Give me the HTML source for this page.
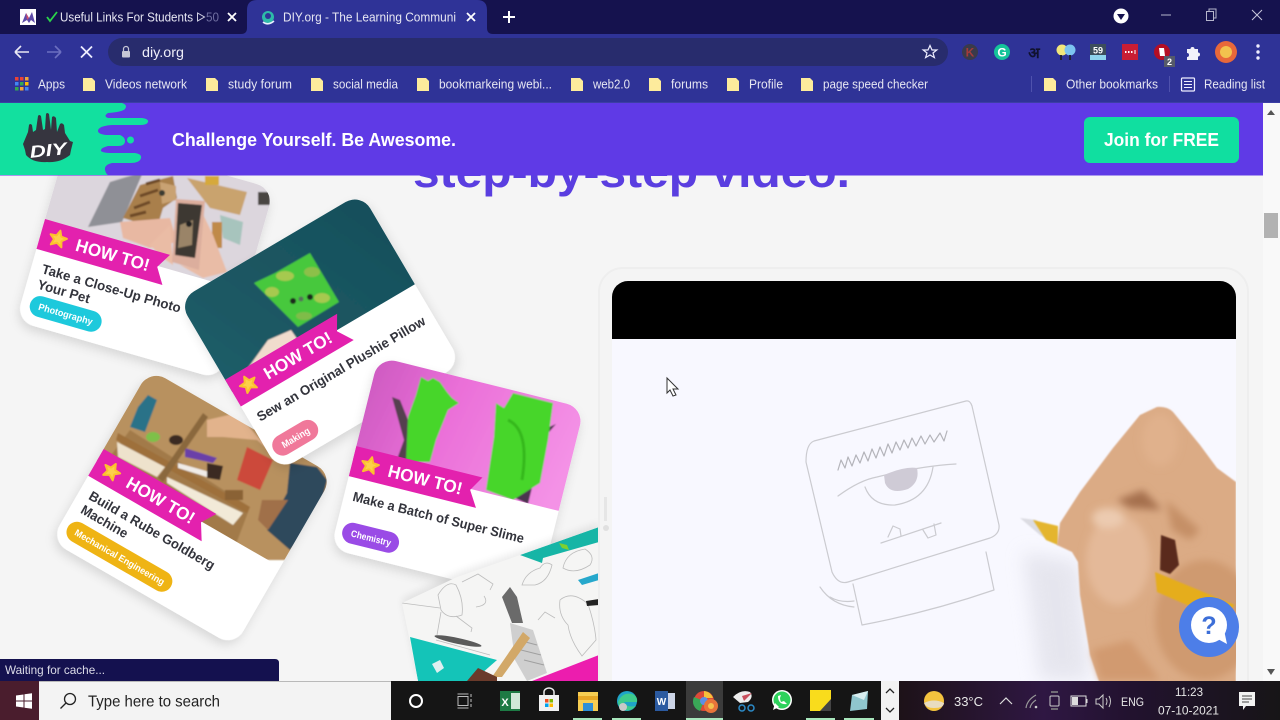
<!DOCTYPE html>
<html><head><meta charset="utf-8"><title>DIY.org</title>
<style>
html,body{margin:0;padding:0;width:1280px;height:720px;overflow:hidden;background:#f5f5f5}
svg{display:block;font-family:"Liberation Sans","Noto Sans CJK SC",sans-serif}
.t{fill:#e6e6f2;font-size:12.5px}
.h{fill:#fff;font-weight:700;font-size:18px}
.ti{fill:#33343c;font-weight:700;font-size:13.5px}
.ht{fill:#fff;font-weight:700;font-size:17.5px}
.pl{fill:#fff;font-weight:700;font-size:9.5px}
</style></head><body>
<svg width="1280" height="720" viewBox="0 0 1280 720" xmlns="http://www.w3.org/2000/svg">
<defs>
<filter id="b" x="-5%" y="-5%" width="110%" height="110%"><feGaussianBlur stdDeviation="0.8"/></filter>
<filter id="b3" x="-30%" y="-30%" width="160%" height="160%"><feGaussianBlur stdDeviation="4"/></filter>
<filter id="b8" x="-40%" y="-40%" width="180%" height="180%"><feGaussianBlur stdDeviation="9"/></filter>
<filter id="s" x="-20%" y="-20%" width="140%" height="140%"><feDropShadow dx="0" dy="5" stdDeviation="5" flood-color="#000" flood-opacity=".12"/></filter>
<clipPath id="c1"><path transform="translate(145 255) rotate(16)" d="M-106 7V-81a18 18 0 0 1 18-18H88a18 18 0 0 1 18 18V7Z"/></clipPath>
<clipPath id="c2"><path transform="translate(320 332) rotate(-30.5)" d="M-106 7V-81a18 18 0 0 1 18-18H88a18 18 0 0 1 18 18V7Z"/></clipPath>
<clipPath id="c3"><path transform="translate(192 508) rotate(30)" d="M-106 7V-81a18 18 0 0 1 18-18H88a18 18 0 0 1 18 18V7Z"/></clipPath>
<clipPath id="c4"><path transform="translate(457.5 478.5) rotate(14)" d="M-106 7V-81a18 18 0 0 1 18-18H88a18 18 0 0 1 18 18V7Z"/></clipPath>
<clipPath id="c5"><path d="M402 603L457 577L520 555L599 527V681H418Z"/></clipPath>
<clipPath id="pg"><rect x="0" y="175" width="1263" height="506"/></clipPath>
<clipPath id="vid"><rect x="612" y="339" width="624" height="345"/></clipPath>
<linearGradient id="tb" x1="0" x2="1" y1="0" y2="0"><stop offset="0" stop-color="#1d1218"/><stop offset=".38" stop-color="#2f1743"/><stop offset=".6" stop-color="#22122f"/><stop offset="1" stop-color="#171517"/></linearGradient>
<linearGradient id="pk" x1="0" x2="1" y1="0" y2=".3"><stop offset="0" stop-color="#bf4fb5"/><stop offset=".5" stop-color="#ea6fd8"/><stop offset="1" stop-color="#f492e6"/></linearGradient>
<linearGradient id="tl" x1="0" x2="1" y1="1" y2="0"><stop offset="0" stop-color="#1c5f6a"/><stop offset="1" stop-color="#174b57"/></linearGradient>
</defs>

<rect width="1280" height="720" fill="#f5f5f5"/>
<g clip-path="url(#pg)">
<text x="413" y="187" font-size="45" font-weight="700" fill="#5a3ee0" textLength="437" lengthAdjust="spacingAndGlyphs">step-by-step video.</text>

<!-- Card 1 -->
<g transform="translate(145 255) rotate(16)" filter="url(#s)"><rect x="-106" y="-99" width="212" height="198" rx="18" fill="#fff"/></g>
<g clip-path="url(#c1)"><g filter="url(#b)">
<rect x="20" y="130" width="270" height="170" fill="#dcd6dd"/>
<path d="M187 178L247 192L240 215L210 208Z" fill="#c9a36e"/>
<path d="M205 176h14v9h-14z" fill="#d6a93a"/>
<path d="M220 215L243 222L240 245L223 238Z" fill="#a7c4bd"/>
<path d="M212 222h10v26h-10z" fill="#c08a4a"/>
<path d="M258 192h12v13h-12z" fill="#4a4442"/>
<path d="M88 227L110 182L143 172L122 222Z" fill="#8f9096"/>
<path d="M123 218L140 185L173 176L177 198L163 208L157 228Z" fill="#a97f4b"/>
<path d="M140 196L158 190M134 208L150 202M146 184L160 180M130 216L146 212" stroke="#6d4a28" stroke-width="3"/>
<path d="M160 182L176 186L176 200L162 204Z" fill="#c9a273"/><circle cx="162" cy="193" r="3" fill="#3a3a30"/>
<path d="M120 222L170 218L177 242L150 248L123 238Z" fill="#e8b8a2"/>
<path d="M150 245L170 225L173 265L163 258Z" fill="#eabca5"/>
<path d="M200 208L213 235L227 272L203 278L180 265L193 268Z" fill="#e9bca6"/>
<path d="M176 199L205 201L199 270L172 262Z" fill="#dcae9d"/>
<path d="M178 203L202 205L195 258L175 255Z" fill="#3d3833"/>
<path d="M180 225L193 220L192 245L178 248Z" fill="#9a8468"/>
<circle cx="189" cy="224" r="3" fill="#222"/>
</g></g>
<g transform="translate(145 255) rotate(16)">
<path d="M-106 -7H24L15 8L25 24H-106Z" fill="#e321ae"/>
<path d="M-88 0l2.500 5.500 6 .5-4.600 3.800 1.600 5.900-5.500-3.200-5.500 3.200 1.600-5.900-4.600-3.800 6-.5z" fill="#fdd04a" stroke="#fcc02e" stroke-width="2" stroke-linejoin="round"/>
<text x="-69" y="15" class="ht" textLength="76" lengthAdjust="spacingAndGlyphs">HOW TO!</text>
<text x="-95" y="46" class="ti" textLength="144" lengthAdjust="spacingAndGlyphs">Take a Close-Up Photo</text>
<text x="-95" y="62" class="ti" textLength="54" lengthAdjust="spacingAndGlyphs">Your Pet</text>
<rect x="-97" y="68" width="74" height="21" rx="10.500" fill="#1dc9dc"/>
<text x="-88" y="82" class="pl" textLength="56" lengthAdjust="spacingAndGlyphs">Photography</text>
</g>

<!-- Card 3 -->
<g transform="translate(192 508) rotate(30)" filter="url(#s)"><rect x="-106" y="-99" width="212" height="198" rx="18" fill="#fff"/></g>
<g clip-path="url(#c3)"><g filter="url(#b)">
<rect x="70" y="360" width="270" height="200" fill="#b8915f"/>
<path d="M130 430L250 507L230 560L100 470Z" fill="#a27a4a"/>
<path d="M118 433L250 507L247 513L116 440Z" fill="#9e703a"/>
<path d="M148 395L157 400L145 432L130 427L138 407Z" fill="#2a7288"/>
<path d="M117 442L165 467L157 477L118 457Z" fill="#eee2cc"/>
<ellipse cx="153" cy="437" rx="7" ry="5" fill="#7ec04a"/>
<ellipse cx="176" cy="440" rx="7" ry="5" fill="#3a2a20"/>
<path d="M207 420L237 413L263 443L277 457L257 440L223 437L207 437Z" fill="#e2b38c"/>
<path d="M247 447L273 460L260 490L237 480Z" fill="#cc4a3a"/>
<path d="M185 448L217 458L213 463L185 457Z" fill="#6a3fa8"/>
<path d="M178 463L213 473L210 478L178 468Z" fill="#f0ece8"/>
<path d="M207 463L223 466L220 480L207 478Z" fill="#3a2a22"/>
<path d="M167 477L243 513L233 525L167 483Z" fill="#f2ead8"/>
<path d="M203 413L208 417L163 482L158 478Z" fill="#8a683c"/>
<path d="M225 490h18v10h-18z" fill="#8a6236"/>
<path d="M290 463L317 467L327 480L317 520L290 550L267 530L287 493Z" fill="#2f4a5c"/>
<path d="M262 500L288 500L268 530L258 520Z" fill="#a0704a"/>
</g></g>
<g transform="translate(192 508) rotate(30)">
<path d="M-106 -7H24L15 8L25 24H-106Z" fill="#e321ae"/>
<path d="M-88 0l2.500 5.500 6 .5-4.600 3.800 1.600 5.900-5.500-3.200-5.500 3.200 1.600-5.900-4.600-3.800 6-.5z" fill="#fdd04a" stroke="#fcc02e" stroke-width="2" stroke-linejoin="round"/>
<text x="-69" y="15" class="ht" textLength="76" lengthAdjust="spacingAndGlyphs">HOW TO!</text>
<text x="-95" y="44" class="ti" textLength="143" lengthAdjust="spacingAndGlyphs">Build a Rube Goldberg</text>
<text x="-95" y="60" class="ti" textLength="52" lengthAdjust="spacingAndGlyphs">Machine</text>
<rect x="-98" y="68" width="119" height="21" rx="10.500" fill="#efb414"/>
<text x="-89" y="82" class="pl" textLength="102" lengthAdjust="spacingAndGlyphs">Mechanical Engineering</text>
</g>

<!-- Card 2 -->
<g transform="translate(320 332) rotate(-30.5)" filter="url(#s)"><rect x="-106" y="-99" width="212" height="198" rx="18" fill="#fff"/></g>
<g clip-path="url(#c2)"><g filter="url(#b)">
<rect x="170" y="190" width="300" height="220" fill="url(#tl)"/>
<path d="M245 372L268 340L291 330L298 340L296 352L262 375Z" fill="#f0dccd"/>
<path d="M275 273L310 253L339 302L298 327L254 283Z" fill="#46c83c"/>
<ellipse cx="285" cy="276" rx="9" ry="5" fill="#a6c94f"/><ellipse cx="312" cy="272" rx="8" ry="5" fill="#8cc04a"/>
<ellipse cx="272" cy="292" rx="7" ry="5" fill="#a6c94f"/><ellipse cx="322" cy="298" rx="8" ry="5" fill="#a6c94f"/>
<ellipse cx="304" cy="316" rx="8" ry="4" fill="#7fbc48"/>
<circle cx="293" cy="301" r="3" fill="#1f2a1f"/><circle cx="310" cy="297" r="3" fill="#1f2a1f"/><circle cx="301" cy="299" r="2.500" fill="#57705a"/>
</g></g>
<g transform="translate(320 332) rotate(-30.500)">
<path d="M-106 -7H24L15 8L25 24H-106Z" fill="#e321ae"/>
<path d="M-88 0l2.500 5.500 6 .5-4.600 3.800 1.600 5.900-5.500-3.200-5.500 3.200 1.600-5.900-4.600-3.800 6-.5z" fill="#fdd04a" stroke="#fcc02e" stroke-width="2" stroke-linejoin="round"/>
<text x="-69" y="15" class="ht" textLength="76" lengthAdjust="spacingAndGlyphs">HOW TO!</text>
<text x="-97" y="47" class="ti" textLength="193" lengthAdjust="spacingAndGlyphs">Sew an Original Plushie Pillow</text>
<rect x="-100" y="68" width="50" height="21" rx="10.500" fill="#f0789a"/>
<text x="-90" y="82" class="pl" textLength="31" lengthAdjust="spacingAndGlyphs">Making</text>
</g>

<!-- Card 4 -->
<g transform="translate(457.5 478.5) rotate(14)" filter="url(#s)"><rect x="-106" y="-99" width="212" height="198" rx="18" fill="#fff"/></g>
<g clip-path="url(#c4)"><g filter="url(#b)">
<rect x="330" y="350" width="270" height="170" fill="url(#pk)"/>
<path d="M392 397L400 400L416 440L408 462L396 462L404 440Z" fill="#55404f"/>
<path d="M421 377L428 381L433 378L440 382L447 392L452 398L459 403L448 410L436 440L430 462L406 462L407 440L408 417L416 395Z" fill="#47d62b"/>
<path d="M498 490L528 504L544 438L556 424L538 432L520 470Z" fill="#4b3550"/>
<path d="M496 403L504 408L513 393L553 403L548 440L540 483L513 500L486 490L494 437Z" fill="#47d62b"/>
<path d="M508 420Q530 430 522 480" stroke="#36b81f" stroke-width="3" fill="none"/>
</g></g>
<g transform="translate(457.5 478.5) rotate(14)">
<path d="M-106 -7H24L15 8L25 24H-106Z" fill="#e321ae"/>
<path d="M-88 0l2.500 5.500 6 .5-4.600 3.800 1.600 5.900-5.500-3.200-5.500 3.200 1.600-5.900-4.600-3.800 6-.5z" fill="#fdd04a" stroke="#fcc02e" stroke-width="2" stroke-linejoin="round"/>
<text x="-69" y="15" class="ht" textLength="76" lengthAdjust="spacingAndGlyphs">HOW TO!</text>
<text x="-97" y="47" class="ti" textLength="176" lengthAdjust="spacingAndGlyphs">Make a Batch of Super Slime</text>
<rect x="-99" y="68" width="58" height="21" rx="10.500" fill="#9a4be6"/>
<text x="-90" y="82" class="pl" textLength="41" lengthAdjust="spacingAndGlyphs">Chemistry</text>
</g>

<!-- Card 5 -->
<path d="M402 603L457 577L520 555L599 527V681H418Z" fill="#000" opacity=".08" transform="translate(0 -4)" filter="url(#b3)"/>
<g clip-path="url(#c5)">
<rect x="400" y="520" width="200" height="165" fill="#f5f5f4"/>
<path d="M410 637L497 660L473 681H418Z" fill="#14c4b8"/>
<path d="M432 664l8-4 4 8-7 5z" fill="#dfeff0"/>
<path d="M520 555L599 527V542L543 558L542 563Z" fill="#16b5a6"/>
<path d="M559 543l8 2 2 5-7-2z" fill="#7fd030"/>
<path d="M532 681L599 655V681Z" fill="#ec1dae"/>
<path d="M578 580L599 573V580L582 585Z" fill="#26a8cc"/>
<g fill="none" stroke="#bcbcbc" stroke-width=".8">
<path d="M438 595Q447 580 456 585Q464 600 462 615Q448 620 441 610ZM462 582L478 574L493 584L490 590M484 596Q490 605 476 607M441 612L437 635M456 616L472 628L471 632M402 603L440 608M436 640L490 655"/>
<path d="M522 585Q526 572 540 568Q545 560 552 565Q548 582 535 585ZM563 568Q566 552 585 549Q596 556 590 565Q575 575 563 568Z"/>
<path d="M560 600Q572 590 588 604Q595 625 596 640L582 656Q570 640 568 625Q558 615 560 600ZM538 620L545 612L555 618"/>
</g>
<path d="M502 597L510 587L517 597L523 623L512 623Z" fill="#6a6a6a"/>
<path d="M510 623L533 630L547 673L527 681L515 660Z" fill="#cfcfcf"/>
<path d="M518 640L537 645M521 650L541 655M524 660L544 665" stroke="#a0a0a0"/>
<ellipse cx="458" cy="641" rx="24" ry="3" transform="rotate(12 458 641)" fill="#5a5a5a"/>
<path d="M523 632L530 638L502 677L492 677Z" fill="#d2a868"/>
<path d="M467 681L478 668L497 677V681Z" fill="#6a3a2a"/>
<path d="M586 601l13-2v6l-12 1z" fill="#222"/>
</g>

<!-- Video card -->
<rect x="599" y="268" width="649" height="440" rx="24" fill="#f4f4f4" stroke="#eeeeee" stroke-width="2"/>
<path d="M612 339V297a16 16 0 0 1 16-16H1220a16 16 0 0 1 16 16V339Z" fill="#000"/>
<rect x="612" y="339" width="624" height="345" fill="#f8f8ff"/>
<rect x="604" y="497" width="3" height="24" fill="#e6e6e6"/><circle cx="606" cy="528" r="3" fill="#e0e0e0"/>

<!-- drawing -->
<g fill="none" stroke="#cbcbd0" stroke-width="1.200" stroke-linecap="round" stroke-linejoin="round">
<path d="M814 441L966 401Q970 400 972 406L999 525Q1000 534 990 538L848 582Q838 585 832 572L806 462Q806 444 814 441Z"/>
<path d="M853 584L862 625Q930 612 994 590L986 552"/>
<path d="M820 587Q832 605 854 607M830 597Q840 603 854 601"/>
<path d="M838 470L841 460L845 468L848 457L852 466L856 455L860 463L864 452L868 461L872 449L876 458L880 447L884 456L888 444L892 453L896 442L900 450L904 440L908 448L912 438L916 446L921 436L925 444L930 435L934 442L940 433L944 441L947 431" stroke="#b4b4ba"/>
<path d="M838 496Q860 480 877 477Q920 466 956 464"/>
<path d="M865 487Q872 506 895 505Q928 500 933 467"/>
<path d="M881 543L941 523M888 537L893 526L900 529L901 536M923 530L928 538L936 535L934 524"/>
</g>
<path d="M884 475Q905 466 917 468Q920 482 908 489Q890 495 885 483Z" fill="#cfcbd6"/>

<!-- hand -->
<g clip-path="url(#vid)">
<path d="M1023 552L1078 562L1090 680H1040Z" fill="#d4d4de" opacity=".5" filter="url(#b8)"/>
<path d="M1020 518L1036 520L1058 545L1040 535Z" fill="#dcdce2" filter="url(#b)"/>
<path d="M1033 520L1058 526L1058 545L1046 540Z" fill="#e4b52e" filter="url(#b)"/>
<path d="M1157 407Q1167 406 1173 412L1200 445L1217 468L1236 482V684H1100L1090 655L1080 595L1078 562L1072 552L1057 545L1060 523L1080 492L1113 448L1140 415Z" fill="#dbab85" filter="url(#b)"/>
<g filter="url(#b3)">
<ellipse cx="1118" cy="560" rx="32" ry="45" fill="#e4b999"/>
<ellipse cx="1108" cy="518" rx="16" ry="10" fill="#eccbb0"/>
<ellipse cx="1160" cy="440" rx="18" ry="26" fill="#e0b18c"/>
<path d="M1117 500L1143 490L1162 510L1130 508Z" fill="#a5704e"/>
<path d="M1166 500L1200 530L1190 540L1172 530Z" fill="#c58f66"/>
<ellipse cx="1205" cy="620" rx="50" ry="60" fill="#cf9a70"/>
<path d="M1100 680L1092 650L1130 640L1160 680Z" fill="#d19a6f"/>
</g>
<path d="M1161 535L1175 540L1179 565L1170 574L1160 570Z" fill="#5a2a1a" filter="url(#b)"/>
<path d="M1155 572L1235 605L1230 610L1187 605L1157 592Z" fill="#e5ad1f" filter="url(#b)"/>
</g>

<!-- cursor -->
<path d="M667 378V393L670 390L673 396L676 395L673 389H678Z" fill="#fff" stroke="#333" stroke-width="1"/>

<!-- help -->
<circle cx="1209" cy="627" r="30" fill="#4d7ee8"/>
<circle cx="1209" cy="625" r="18" fill="#fff"/>
<path d="M1216 638L1227 644L1224 630Z" fill="#fff"/>
<text x="1209" y="634" text-anchor="middle" font-size="25" font-weight="700" fill="#3d6fd8">?</text>
</g>

<!-- scrollbar -->
<rect x="1263" y="103" width="17" height="578" fill="#f9f9f9"/>
<path d="M1267 115L1271 110L1275 115Z" fill="#555"/>
<path d="M1267 669L1271 675L1275 669Z" fill="#555"/>
<rect x="1264" y="213" width="14" height="25" fill="#b2b2b2"/>

<!-- DIY banner -->
<rect x="0" y="103" width="1263" height="72.500" fill="#5f3ae6"/>
<path d="M0 103H122Q128 105 125 109Q122 112 108 113Q103 116 108 118H142Q149 119 148 122Q147 125 140 125H112Q98 126 98 131Q98 134 106 135H120Q125 137 125 141Q125 146 118 146H108Q100 148 101 151Q103 153 112 153H135Q142 154 141 158Q140 163 130 163H112Q104 165 105 170Q106 174 108 175H0Z" fill="#12e09f"/>
<circle cx="130.500" cy="140" r="3.500" fill="#12e09f"/>
<path d="M23 144L28 132L29 125Q30 123 32 125L33 132L36 130L38 116Q39 114 41 116L43 130L45 129L46 114Q47 112 49 114L51 130L52 117Q54 115 56 118L57 132L60 124Q62 122 64 125L65 133L70 141L73 142L71 150L70 155Q60 163 47 162Q33 163 26 155L25 150Z" fill="#36353f"/>
<text x="48" y="156" transform="rotate(-6 48 149)" text-anchor="middle" font-size="17" font-weight="700" font-style="italic" fill="#fff" textLength="37" lengthAdjust="spacingAndGlyphs">DIY</text>
<text x="172" y="146" class="h" textLength="284" lengthAdjust="spacingAndGlyphs">Challenge Yourself. Be Awesome.</text>
<rect x="1084" y="117" width="155" height="46" rx="6" fill="#10dfa0"/>
<text x="1104" y="146" class="h" textLength="115" lengthAdjust="spacingAndGlyphs">Join for FREE</text>

<!-- tab strip -->
<rect x="0" y="0" width="1280" height="34" fill="#15124e"/>
<rect x="0" y="34" width="1280" height="69" fill="#2f3397"/>
<rect x="0" y="102" width="1280" height="1" fill="#3c3fa5"/>
<path d="M241 34Q247 34 247 28V10Q247 0 257 0H477Q487 0 487 10V28Q487 34 493 34Z" fill="#2f3397"/>
<rect x="20" y="9" width="16" height="16" fill="#fff"/>
<path d="M22 23L26 13L29 18L32 12L35 23L31 20L29 23L27 20Z" fill="#5d4aa8"/>
<path d="M26 13L29 18L27 20Z" fill="#d2506a"/>
<path d="M47 17L50 21L57 12" fill="none" stroke="#2bd44a" stroke-width="1.800"/>
<text x="60" y="21.500" class="t" textLength="133" lengthAdjust="spacingAndGlyphs">Useful Links For Students</text>
<path d="M197.500 13V21L204.500 17Z" fill="none" stroke="#d0d0e2" stroke-width="1"/>
<text x="206" y="21.500" font-size="12.500" fill="#6f6ea0" textLength="13" lengthAdjust="spacingAndGlyphs">50</text>
<path d="M228 13L236 21M236 13L228 21" stroke="#fff" stroke-width="1.800"/>
<circle cx="268" cy="17" r="6" fill="#2dbba8"/><circle cx="268" cy="16" r="3" fill="#2f3397"/><path d="M263 22Q268 26 274 21" stroke="#e8f0ff" stroke-width="1.600" fill="none"/>
<text x="283" y="21.500" class="t" textLength="173" lengthAdjust="spacingAndGlyphs">DIY.org - The Learning Communi</text>
<path d="M467 13L475 21M475 13L467 21" stroke="#fff" stroke-width="1.800"/>
<path d="M509 11V23M503 17H515" stroke="#fff" stroke-width="2"/>
<circle cx="1121" cy="16" r="7.500" fill="#fff"/><path d="M1117 14H1125L1121 20Z" fill="#15124e"/>
<path d="M1161 15H1171" stroke="#b5b5cc" stroke-width="1"/>
<path d="M1206.500 11.500H1213.500V20.500H1206.500ZM1209 11.500V9H1216V18H1213.500" fill="none" stroke="#b5b5cc" stroke-width="1"/>
<path d="M1252 10L1262 20M1262 10L1252 20" stroke="#c8c8dc" stroke-width="1"/>

<!-- toolbar -->
<path d="M15 52H29M15 52L21 46M15 52L21 58" fill="none" stroke="#e8e8f4" stroke-width="1.600"/>
<path d="M47 52H61M61 52L55 46M61 52L55 58" fill="none" stroke="#6c6fc0" stroke-width="1.600"/>
<path d="M81 46.500L92 57.500M92 46.500L81 57.500" stroke="#eef" stroke-width="1.800"/>
<rect x="108" y="38" width="840" height="28" rx="14" fill="#282c6d"/>
<rect x="122" y="51" width="8" height="6.500" rx="1" fill="#c6c6d6"/><path d="M123.500 51V49a2.500 2.500 0 0 1 5 0V51" fill="none" stroke="#c6c6d6" stroke-width="1.200"/>
<text x="142" y="57" font-size="14" fill="#eeeef8" textLength="42" lengthAdjust="spacingAndGlyphs">diy.org</text>
<path d="M930 45.500L932 50H936.800L933 53L934.400 57.600L930 55L925.600 57.600L927 53L923.200 50H928Z" fill="none" stroke="#eef" stroke-width="1.200"/>
<circle cx="970" cy="52" r="8" fill="#3a3a4a"/><text x="970" y="56.500" text-anchor="middle" font-size="12" font-weight="700" fill="#a33b3b">K</text>
<circle cx="1002" cy="52" r="8" fill="#15c39a"/><text x="1002" y="56.500" text-anchor="middle" font-size="12" font-weight="700" fill="#fff">G</text>
<text x="1034" y="58" text-anchor="middle" font-size="15" font-weight="700" fill="#10122e" font-family="'Noto Sans CJK SC','DejaVu Sans',sans-serif">अ</text>
<circle cx="1062" cy="50" r="5.500" fill="#f2e77a"/><circle cx="1070" cy="50" r="5.500" fill="#7cc4f0"/><path d="M1061 55V60M1070 55V60" stroke="#223" stroke-width="2"/>
<rect x="1090" y="44" width="16" height="11" fill="#3c4d5c"/><rect x="1090" y="55" width="16" height="5" fill="#8fd4ee"/><text x="1098" y="53.500" text-anchor="middle" font-size="9" font-weight="700" fill="#fff">59</text>
<rect x="1122" y="44" width="16" height="16" fill="#c81d34"/><path d="M1125 52h1.500M1128 52h1.500M1131 52h1.500" stroke="#fff" stroke-width="2"/><path d="M1135 50V54" stroke="#fff" stroke-width="1"/>
<circle cx="1162" cy="52" r="8" fill="#b50e24"/><path d="M1159 48h5l1 8h-5z" fill="#fff"/>
<rect x="1164" y="56" width="11" height="11" fill="#555a6a"/><text x="1169.500" y="65" text-anchor="middle" font-size="9" font-weight="700" fill="#fff">2</text>
<path d="M1187 49h3.500a2 2 0 0 1 4 0H1198v3.500a2 2 0 0 1 0 4V60h-11v-3a2 2 0 0 0 0-4Z" fill="#f2f2fa"/>
<circle cx="1226" cy="52" r="11" fill="#e8683a"/><circle cx="1226" cy="52" r="6" fill="#f2c24e"/>
<circle cx="1258" cy="46" r="1.700" fill="#eef"/><circle cx="1258" cy="52" r="1.700" fill="#eef"/><circle cx="1258" cy="58" r="1.700" fill="#eef"/>

<!-- bookmarks -->
<g fill="#ea4335"><rect x="15" y="77" width="3.500" height="3.500"/><rect x="20" y="77" width="3.500" height="3.500"/><rect x="25" y="77" width="3.500" height="3.500" fill="#f2a33a"/></g>
<g fill="#4285f4"><rect x="15" y="82" width="3.500" height="3.500"/><rect x="20" y="82" width="3.500" height="3.500" fill="#34a853"/><rect x="25" y="82" width="3.500" height="3.500" fill="#fbbc05"/></g>
<g fill="#34a853"><rect x="15" y="87" width="3.500" height="3.500"/><rect x="20" y="87" width="3.500" height="3.500" fill="#f2a33a"/><rect x="25" y="87" width="3.500" height="3.500" fill="#4285f4"/></g>
<g fill="#fdeb9c">
<path d="M83 78h9l3 3v10H83Z"/><path d="M206 78h9l3 3v10H206Z"/><path d="M311 78h9l3 3v10H311Z"/><path d="M417 78h9l3 3v10H417Z"/><path d="M571 78h9l3 3v10H571Z"/><path d="M649 78h9l3 3v10H649Z"/><path d="M727 78h9l3 3v10H727Z"/><path d="M801 78h9l3 3v10H801Z"/><path d="M1044 78h9l3 3v10H1044Z"/>
</g>
<text x="38" y="88.500" class="t" textLength="27" lengthAdjust="spacingAndGlyphs">Apps</text>
<text x="105" y="88.500" class="t" textLength="82" lengthAdjust="spacingAndGlyphs">Videos network</text>
<text x="228" y="88.500" class="t" textLength="64" lengthAdjust="spacingAndGlyphs">study forum</text>
<text x="333" y="88.500" class="t" textLength="65" lengthAdjust="spacingAndGlyphs">social media</text>
<text x="439" y="88.500" class="t" textLength="113" lengthAdjust="spacingAndGlyphs">bookmarkeing webi...</text>
<text x="593" y="88.500" class="t" textLength="37" lengthAdjust="spacingAndGlyphs">web2.0</text>
<text x="671" y="88.500" class="t" textLength="37" lengthAdjust="spacingAndGlyphs">forums</text>
<text x="749" y="88.500" class="t" textLength="34" lengthAdjust="spacingAndGlyphs">Profile</text>
<text x="823" y="88.500" class="t" textLength="105" lengthAdjust="spacingAndGlyphs">page speed checker</text>
<text x="1066" y="88.500" class="t" textLength="92" lengthAdjust="spacingAndGlyphs">Other bookmarks</text>
<text x="1204" y="88.500" class="t" textLength="61" lengthAdjust="spacingAndGlyphs">Reading list</text>
<path d="M1031.500 76V92M1169.500 76V92" stroke="#4f52ad" stroke-width="1"/>
<rect x="1181.500" y="78" width="13" height="13" rx="1" fill="none" stroke="#eef" stroke-width="1.200"/><path d="M1184 81.500h8M1184 84.500h8M1184 87.500h8" stroke="#eef" stroke-width="1"/>

<!-- status bubble -->
<path d="M0 659H275Q279 659 279 663V681H0Z" fill="#14114f"/>
<text x="5" y="674" font-size="12" fill="#dcdce8" textLength="100" lengthAdjust="spacingAndGlyphs">Waiting for cache...</text>

<!-- taskbar -->
<rect x="0" y="681" width="1280" height="39" fill="#151515"/>
<rect x="0" y="681" width="39" height="39" fill="#4a1d2d"/>
<path d="M16 695.500L23.500 694.500V700.500H16ZM24.500 694.300L32 693.300V700.500H24.500ZM16 701.500H23.500V707.500L16 706.500ZM24.500 701.500H32V708.700L24.500 707.700Z" fill="#fff"/>
<rect x="39" y="681" width="352" height="39" fill="#f3f3f3"/>
<rect x="39" y="681" width="352" height="1" fill="#b9b9b9"/>
<circle cx="70" cy="699" r="5.500" fill="none" stroke="#222" stroke-width="1.300"/><path d="M66 703L60.500 708.500" stroke="#222" stroke-width="1.300"/>
<text x="88" y="706.500" font-size="16" fill="#222" textLength="132" lengthAdjust="spacingAndGlyphs">Type here to search</text>
<circle cx="416" cy="701" r="6" fill="none" stroke="#fff" stroke-width="2"/>
<path d="M457.500 694H468.500M457.500 708H468.500" stroke="#bbb" stroke-width="1"/><rect x="458" y="696.500" width="10" height="9" fill="none" stroke="#bbb"/><path d="M471 694V708" stroke="#888" stroke-width="1.500" stroke-dasharray="3 2"/>
<rect x="500" y="691" width="20" height="20" fill="#1d7a44"/><rect x="511" y="693" width="9" height="16" fill="#cfe8d8"/><text x="505" y="706" text-anchor="middle" font-size="11" font-weight="700" fill="#fff">X</text>
<path d="M539 695H559V711H539Z" fill="#f2f2f2"/><path d="M544 695V692a5 4 0 0 1 10 0V695" fill="none" stroke="#eee" stroke-width="1.500"/><rect x="545" y="699" width="3.500" height="3.500" fill="#f25022"/><rect x="549.500" y="699" width="3.500" height="3.500" fill="#7fba00"/><rect x="545" y="703.500" width="3.500" height="3.500" fill="#00a4ef"/><rect x="549.500" y="703.500" width="3.500" height="3.500" fill="#ffb900"/>
<path d="M578 692H598V711H578Z" fill="#f6cd52"/><path d="M578 696H598V700H578Z" fill="#e8a825"/><rect x="583" y="703" width="10" height="8" fill="#2d8fd8"/>
<circle cx="627" cy="701" r="10" fill="#1fa4c8"/><path d="M618 702Q622 692 632 694Q638 696 637 702H624Q626 708 636 706Q630 712 624 710Q618 707 618 702Z" fill="#3ecb8c"/><circle cx="623" cy="707" r="4" fill="#c9c9c9"/>
<rect x="658" y="693" width="10" height="17" fill="#e4e6ee"/><rect x="666" y="693" width="9" height="16" fill="#ccd4e6"/><rect x="655" y="691" width="13" height="20" fill="#2b5aa0"/><text x="661.500" y="705" text-anchor="middle" font-size="10" font-weight="700" fill="#fff">W</text>
<rect x="686" y="681" width="37" height="39" fill="#3b3b3b"/>
<circle cx="704" cy="701" r="10" fill="#dc4a38"/><path d="M704 701L694 697A10 10 0 0 0 700 711Z" fill="#3aa757"/><path d="M704 691A10 10 0 0 1 713 698H704Z" fill="#f6c13a"/><circle cx="704" cy="701" r="4" fill="#5c8fe6"/>
<circle cx="711" cy="706" r="7" fill="#e8743a"/><circle cx="711" cy="706" r="3" fill="#f4c24e"/>
<path d="M733 697Q741 689 750 692Q754 697 748 702L740 703Z" fill="#eee"/><path d="M742 696L752 693L744 701Z" fill="#c94f5d"/><circle cx="742" cy="708" r="3" fill="none" stroke="#2c8bc8" stroke-width="1.500"/><circle cx="751" cy="708" r="3" fill="none" stroke="#2c8bc8" stroke-width="1.500"/>
<circle cx="782" cy="700" r="10" fill="#fff"/><circle cx="782" cy="700" r="8.500" fill="#2ed25c"/><path d="M773 710L775 703L779 707Z" fill="#fff"/><path d="M778 696Q778 705 787 704L784 701L781 702Q780 700 780 698L781 695Z" fill="#fff"/>
<rect x="810" y="690" width="21" height="21" fill="#f9dc1c"/><path d="M831 699V711H820Z" fill="#444"/>
<path d="M852 695L868 691L867 709L850 711Z" fill="#8fc6ce"/><path d="M852 695L868 691L864 700Z" fill="#d8eef0"/>
<g fill="#a8e6bc">
<rect x="573" y="718" width="29" height="2"/><rect x="612" y="718" width="29" height="2"/><rect x="686" y="718" width="37" height="2"/><rect x="806" y="718" width="29" height="2"/><rect x="844" y="718" width="30" height="2"/>
</g>
<rect x="881" y="681" width="18" height="39" fill="#f2f2f2"/>
<path d="M886 693L890 689L894 693M886 708L890 712L894 708" fill="none" stroke="#222" stroke-width="1.300"/>
<rect x="899" y="681" width="381" height="39" fill="url(#tb)"/>
<circle cx="934" cy="701" r="10" fill="#f3c33e"/><path d="M924 703Q934 698 944 703Q944 708 934 708Q926 708 924 703Z" fill="#e8dcc0"/>
<g fill="#e8e8e8" font-size="13">
<text x="954" y="706" textLength="29" lengthAdjust="spacingAndGlyphs">33°C</text>
<text x="1121" y="706" font-size="12" textLength="23" lengthAdjust="spacingAndGlyphs">ENG</text>
<text x="1175" y="696" font-size="12" textLength="28" lengthAdjust="spacingAndGlyphs">11:23</text>
<text x="1158" y="714.500" font-size="12" textLength="61" lengthAdjust="spacingAndGlyphs">07-10-2021</text>
</g>
<path d="M1000 704L1006 698L1012 704" fill="none" stroke="#ddd" stroke-width="1.200"/>
<path d="M1026 708Q1027 700 1036 695M1030 708Q1031 703 1036 700" fill="none" stroke="#999" stroke-width="1.200"/><circle cx="1036" cy="707" r="1.300" fill="#ccc"/>
<rect x="1050" y="696" width="9" height="10" rx="1" fill="none" stroke="#ccc"/><path d="M1051 692H1058M1051 709H1058" stroke="#888" stroke-width="1.500"/>
<rect x="1071" y="696" width="15" height="10" fill="none" stroke="#ddd"/><rect x="1072" y="697" width="6" height="8" fill="#ddd"/><rect x="1086" y="699" width="1.500" height="4" fill="#ddd"/>
<path d="M1096 699H1099L1103 695V708L1099 704H1096ZM1106 698Q1108 701 1106 705M1109 696Q1112 701 1109 707" fill="none" stroke="#ccc"/>
<path d="M1239 692H1255V706H1246L1243 710V706H1239Z" fill="#f2f2f2"/><path d="M1242 696H1252M1242 699H1252M1242 702H1249" stroke="#444" stroke-width="1"/>
</svg>
</body></html>
